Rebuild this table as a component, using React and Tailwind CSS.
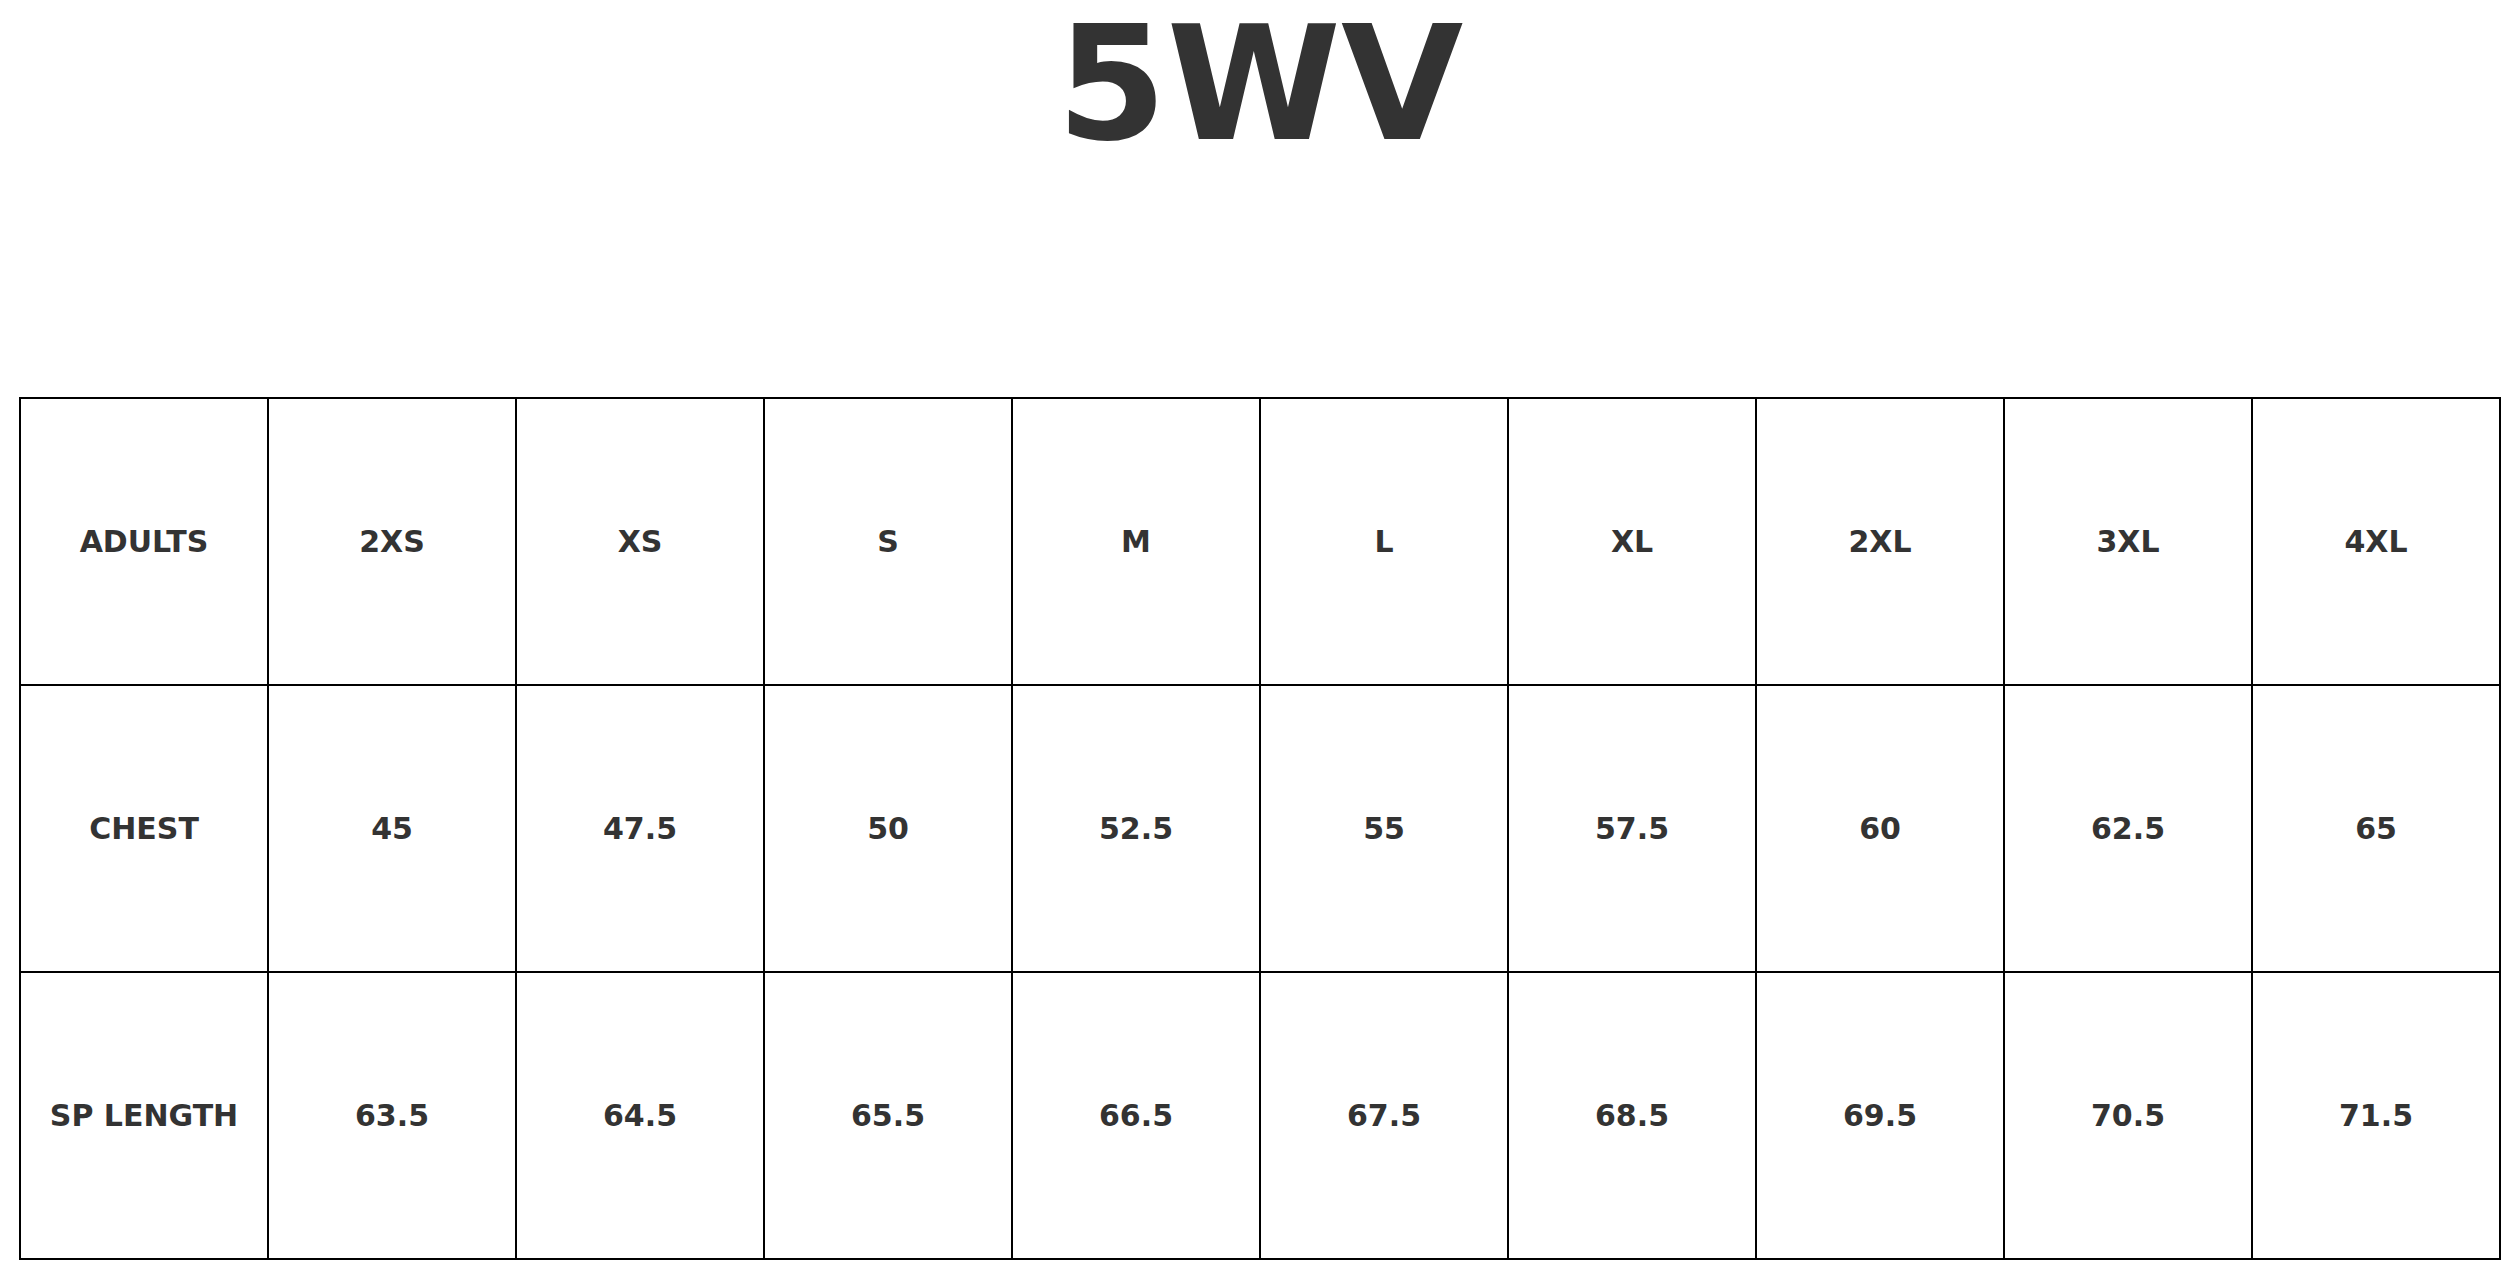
import React from "react";

const rows = [
  ["ADULTS", "2XS", "XS", "S", "M", "L", "XL", "2XL", "3XL", "4XL"],
  ["CHEST", "45", "47.5", "50", "52.5", "55", "57.5", "60", "62.5", "65"],
  ["SP LENGTH", "63.5", "64.5", "65.5", "66.5", "67.5", "68.5", "69.5", "70.5", "71.5"],
];

const App = () => {
  return (
    <div className="bg-white min-h-[1279px] text-[#333] font-['DejaVu_Sans',sans-serif] font-bold">
      <div className="h-[397px] pt-[5px]">
        <h1 className="text-center text-[158px] leading-none">5WV</h1>
      </div>
      <div className="px-[19px]">
        <table className="w-full table-fixed border-collapse border-2 border-black">
          <tbody>
            {rows.map((row, i) => (
              <tr key={i} className="h-[287px]">
                {row.map((cell, j) => (
                  <td
                    key={j}
                    className="border-2 border-black text-center align-middle text-[30px]"
                  >
                    {cell}
                  </td>
                ))}
              </tr>
            ))}
          </tbody>
        </table>
      </div>
    </div>
  );
};

export default App;
